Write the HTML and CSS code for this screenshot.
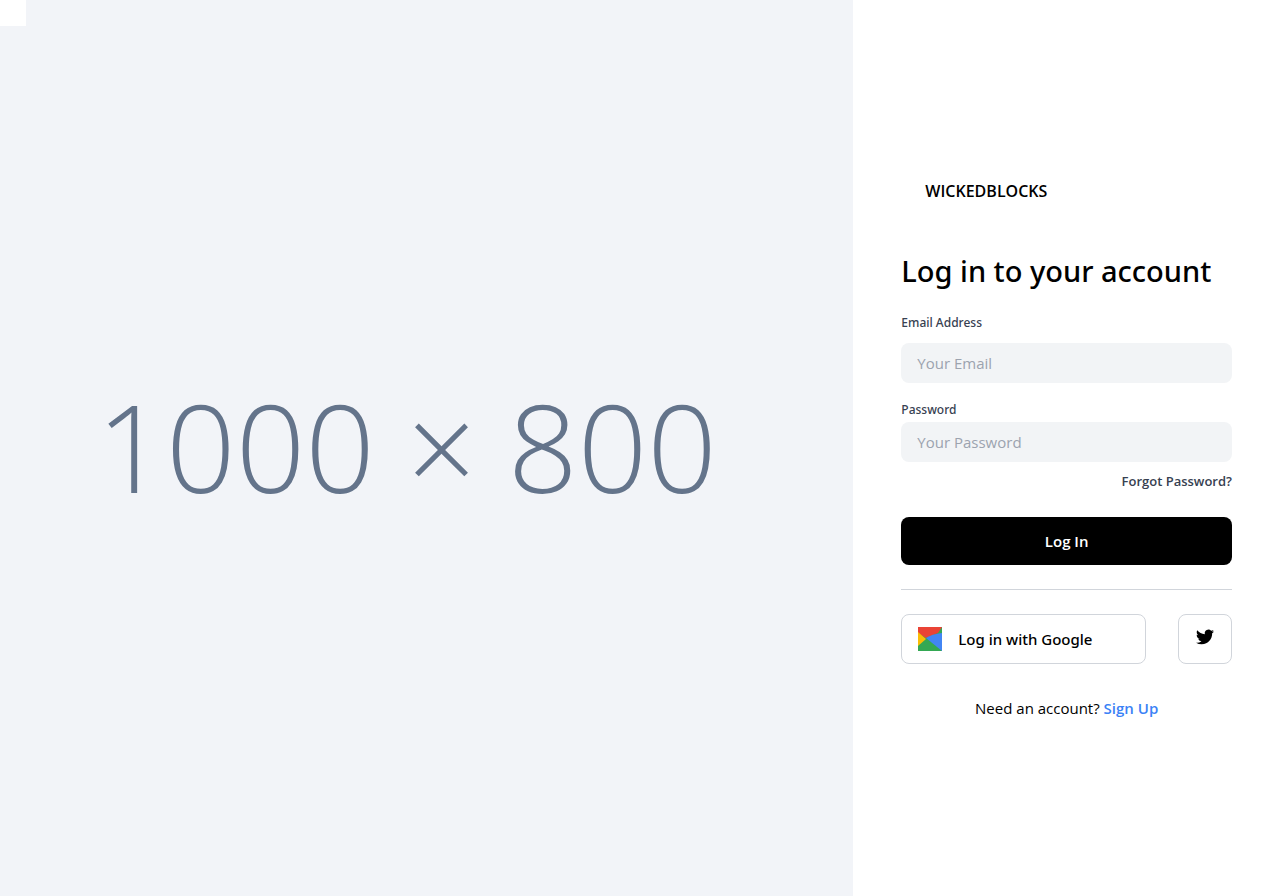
FILE: index.html
```html
<!DOCTYPE html>
<html lang="en">
<head>
<meta charset="utf-8">
<meta name="viewport" content="width=device-width, initial-scale=1">
<title>Log in</title>
<link rel="stylesheet" href="styles.css">
</head>
<body>
<main class="page">
  <div class="cover">
    <span class="corner"></span>
    <span class="cover-size">1000 × 800</span>
  </div>
  <section class="panel">
    <a class="brand" href="#">WICKEDBLOCKS</a>
    <h1 class="title">Log in to your account</h1>
    <form class="form">
      <label class="label" for="email">Email Address</label>
      <input class="input input-email" id="email" type="email" placeholder="Your Email">
      <label class="label label-password" for="password">Password</label>
      <input class="input" id="password" type="password" placeholder="Your Password">
      <a class="forgot" href="#">Forgot Password?</a>
      <button class="submit" type="submit">Log In</button>
    </form>
    <hr class="rule">
    <div class="social">
      <button class="social-button google" type="button">
        <svg class="google-icon" viewBox="0 0 24 24" aria-hidden="true">
          <path fill="#34a853" d="M0 0H24V24H0Z"/>
          <path fill="#ea4335" d="M0 0H24L20 6L15 8L8 11L0 6Z"/>
          <path fill="#fbbc05" d="M0 5L8 12L0 19Z"/>
          <path fill="#4285f4" d="M8 11Q14 7 24 6V24Z"/>
        </svg>
        <span>Log in with Google</span>
      </button>
      <button class="social-button twitter" type="button" aria-label="Log in with Twitter">
        <svg class="twitter-icon" viewBox="0 0 24 24" aria-hidden="true">
          <path d="M23.953 4.57a10 10 0 01-2.825.775 4.958 4.958 0 002.163-2.723c-.951.555-2.005.959-3.127 1.184a4.92 4.92 0 00-8.384 4.482C7.69 8.095 4.067 6.13 1.64 3.162a4.822 4.822 0 00-.666 2.475c0 1.71.87 3.213 2.188 4.096a4.904 4.904 0 01-2.228-.616v.06a4.923 4.923 0 003.946 4.827 4.996 4.996 0 01-2.212.085 4.936 4.936 0 004.604 3.417 9.867 9.867 0 01-6.102 2.105c-.39 0-.779-.023-1.17-.067a13.995 13.995 0 007.557 2.209c9.053 0 13.998-7.496 13.998-13.985 0-.21 0-.42-.015-.63A9.935 9.935 0 0024 4.59z"/>
        </svg>
      </button>
    </div>
    <p class="signup">Need an account? <a class="signup-link" href="#">Sign Up</a></p>
  </section>
</main>
</body>
</html>
```
FILE: styles.css
```css
* {
  box-sizing: border-box;
}

body {
  margin: 0;
  background: #fff;
  color: #000;
  font: 15px/24px "Open Sans", "Noto Sans", sans-serif;
}

a {
  color: inherit;
  text-decoration: none;
}

button,
input {
  font: inherit;
  color: inherit;
}

.page {
  display: grid;
  grid-template-columns: 2fr 1fr;
  min-height: 100vh;
}

.cover {
  position: relative;
  display: flex;
  align-items: center;
  justify-content: center;
  padding: 0 40px 4px 0;
  background: #f2f4f8;
}

.corner {
  position: absolute;
  top: 0;
  left: 0;
  width: 26px;
  height: 26px;
  background: #fff;
}

.cover-size {
  color: #64748b;
  font-size: 122px;
  font-weight: 300;
  line-height: 1;
  white-space: nowrap;
}

.panel {
  display: flex;
  flex-direction: column;
  justify-content: center;
  padding: 2px 48px 0;
}

.brand {
  padding: 0 24px;
  font-size: 16px;
  font-weight: 600;
}

.title {
  margin: 48px 0 20px;
  font-family: "Noto Sans", "Open Sans", sans-serif;
  font-size: 29px;
  font-weight: 500;
  line-height: 40px;
}

.form {
  display: flex;
  flex-direction: column;
}

.label {
  color: #374151;
  font-family: "Noto Sans", "Open Sans", sans-serif;
  font-size: 12px;
  font-weight: 500;
  line-height: 24px;
}

.label-password {
  margin-top: 15px;
}

.input {
  width: 100%;
  height: 40px;
  padding: 0 16px;
  border: 0;
  border-radius: 8px;
  background: #f2f4f6;
}

.input-email {
  margin-top: 8px;
}

.input::placeholder {
  color: #9ca3af;
  opacity: 1;
}

.forgot {
  align-self: flex-end;
  margin-top: 7px;
  color: #374151;
  font-size: 13px;
  font-weight: 600;
}

.submit {
  height: 48px;
  margin-top: 24px;
  border: 0;
  border-radius: 8px;
  background: #000;
  color: #fff;
  font-weight: 600;
}

.rule {
  width: 100%;
  margin: 24px 0;
  border: 0;
  border-top: 1px solid #d1d5db;
}

.social {
  display: flex;
  gap: 32px;
}

.social-button {
  display: flex;
  align-items: center;
  height: 50px;
  padding: 0 16px;
  border: 1px solid #d1d5db;
  border-radius: 8px;
  background: #fff;
}

.google {
  flex: 1;
  gap: 16px;
  font-family: "Noto Sans", "Open Sans", sans-serif;
  font-weight: 500;
}

.google-icon {
  width: 24px;
  height: 24px;
}

.twitter {
  justify-content: center;
  width: 54px;
  padding: 0 0 4px;
}

.twitter-icon {
  width: 18px;
  height: 18px;
}

.signup {
  margin: 32px 0 0;
  text-align: center;
}

.signup-link {
  color: #3b82f6;
  font-weight: 600;
}
```
